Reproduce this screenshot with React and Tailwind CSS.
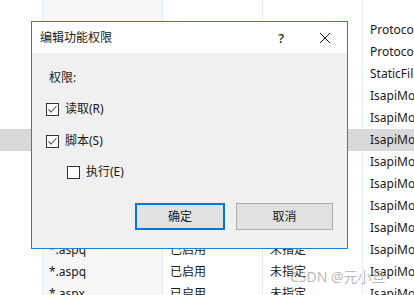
const rightNames = [
  'ProtocolSupportModule',
  'ProtocolSupportModule',
  'StaticFileModule',
  'IsapiModule',
  'IsapiModule',
  'IsapiModule',
  'IsapiModule',
  'IsapiModule',
  'IsapiModule',
  'IsapiModule',
  'IsapiModule',
  'IsapiModule',
  'IsapiModule',
]

// rows 0-9 sit under the dialog, so only the last ones show their cells
const rows = rightNames.map((name, i) => ({
  path: i < 10 ? '' : i === 12 ? '*.aspx' : '*.aspq',
  state: i < 10 ? '' : '已启用',
  verb: i < 10 ? '' : '未指定',
  name,
  selected: i === 5,
}))

function Check({ checked }) {
  return (
    <span className="flex h-[13px] w-[13px] shrink-0 items-center justify-center border border-[#333333] bg-white">
      {checked && (
        <svg width="11" height="11" viewBox="0 0 11 11">
          <polyline
            points="1.5,5.5 4,8 9.5,2"
            fill="none"
            stroke="#555555"
            strokeWidth="1.1"
          />
        </svg>
      )}
    </span>
  )
}

function Option({ checked, label, indent }) {
  return (
    <div className={`flex h-4 items-center gap-[6px] ${indent ? 'ml-[21px]' : ''}`}>
      <Check checked={checked} />
      <span>{label}</span>
    </div>
  )
}

export default function App() {
  return (
    <div
      className="relative h-[295px] w-[414px] overflow-hidden bg-white text-[12px] leading-4 text-[#1a1a1a]"
      style={{ fontFamily: "'Noto Sans', 'Noto Sans CJK SC', sans-serif" }}
    >
      {/* list behind the dialog */}
      <div className="flex h-[19px]">
        <div className="w-[42px]" />
        <div className="w-[120px] border-l border-[#e3ecf8] bg-[#f7f7f7]" />
        <div className="w-[100px] border-l border-[#e3ecf8]" />
        <div className="w-[100px] border-l border-[#e3ecf8]" />
        <div className="flex-1 border-l border-[#e3ecf8]" />
      </div>
      {rows.map((r, i) => (
        <div
          key={i}
          className={`flex h-[22px] items-center whitespace-nowrap ${r.selected ? 'bg-[#d9d9d9]' : ''}`}
        >
          <div className="h-full w-[42px]" />
          <div
            className={`flex h-full w-[120px] items-center border-l pl-[6px] ${r.selected ? 'border-[#d9d9d9]' : 'border-[#e3ecf8] bg-[#f7f7f7]'}`}
          >
            {r.path}
          </div>
          <div
            className={`flex h-full w-[100px] items-center border-l pl-[7px] ${r.selected ? 'border-[#d9d9d9]' : 'border-[#e3ecf8]'}`}
          >
            {r.state}
          </div>
          <div
            className={`flex h-full w-[100px] items-center border-l pl-[7px] ${r.selected ? 'border-[#d9d9d9]' : 'border-[#e3ecf8]'}`}
          >
            {r.verb}
          </div>
          <div
            className={`flex h-full min-w-0 flex-1 items-center overflow-hidden border-l pl-[7px] ${r.selected ? 'border-[#d9d9d9]' : 'border-[#e3ecf8]'}`}
          >
            {r.name}
          </div>
        </div>
      ))}

      {/* dialog */}
      <div className="absolute left-[31px] top-[21px] flex h-[228px] w-[317px] flex-col border border-[#1883d7] bg-[#f0f0f0]">
        <div className="flex h-[31px] items-center bg-white pl-2">
          <span className="flex-1">编辑功能权限</span>
          <span className="mr-[35px] text-[13px] font-medium">?</span>
          <svg className="mr-[16px]" width="12" height="12" viewBox="0 0 12 12">
            <path d="M1 1L11 11M11 1L1 11" stroke="#1a1a1a" strokeWidth="1" />
          </svg>
        </div>
        <div className="flex flex-1 flex-col pl-[14px] pr-[14px]">
          <div className="ml-[3px] mt-[17px]">权限:</div>
          <div className="mt-[15px]">
            <Option checked label="读取(R)" />
          </div>
          <div className="mt-4">
            <Option checked label="脚本(S)" />
          </div>
          <div className="mt-[15px]">
            <Option label="执行(E)" indent />
          </div>
          <div className="mt-[23px] flex justify-end gap-[11px]">
            <button className="flex h-[27px] w-[90px] items-center justify-center border-2 border-[#0078d7] bg-[#e1e1e1]">
              确定
            </button>
            <button className="flex h-[27px] w-[97px] items-center justify-center border border-[#adadad] bg-[#e1e1e1]">
              取消
            </button>
          </div>
        </div>
      </div>

      {/* watermark */}
      <div className="absolute left-[290px] top-[268px] text-[14px] leading-[18px] text-[#a8a8a8]/80">
        CSDN @元小旦
      </div>
    </div>
  )
}
